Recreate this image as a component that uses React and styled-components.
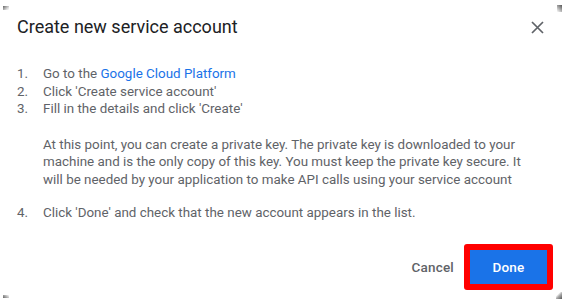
import * as React from "react";
import styled, { createGlobalStyle } from "styled-components";

const Global = createGlobalStyle`
  html, body {
    margin: 0;
    padding: 0;
    background: #fff;
  }
  body {
    font-family: Roboto, "Liberation Sans", Arial, sans-serif;
    -webkit-font-smoothing: antialiased;
  }
`;

const Dialog = styled.div`
  position: relative;
  width: 578px;
  height: 306px;
  box-sizing: border-box;
  padding: 15px 0 0 17px;

  display: flex;
  flex-direction: column;
  background: #fff;
`;

const Header = styled.div`
  display: flex;
  justify-content: space-between;
  align-items: center;
  padding-right: 34px;
`;

const Title = styled.h2`
  margin: 0;
  font-size: 18px;
  font-weight: 400;
  line-height: 24px;
  color: #202124;
`;

const Close = styled.button`
  display: flex;
  align-items: center;
  justify-content: center;
  width: 14px;
  height: 14px;
  padding: 0;
  border: 0;
  background: none;
  cursor: pointer;
`;

const Steps = styled.ol`
  margin: 26px 0 0;
  padding: 0;
  list-style: none;

  font-size: 13.4px;
  line-height: 17.5px;
  color: #5f6368;
`;

const Step = styled.li`
  display: flex;
  margin-top: ${(p) => (p.$spaced ? "16px" : "0")};
`;

const Num = styled.span`
  flex: 0 0 26px;
`;

const StepBody = styled.div`
  flex: 1;
  padding-right: 40px;
`;

const Note = styled.p`
  margin: 18px 0 0;
`;

const Link = styled.a`
  color: #1a73e8;
  text-decoration: none;
`;

const Footer = styled.div`
  margin-top: auto;
  display: flex;
  justify-content: flex-end;
  align-items: center;
  gap: 2px;
  padding: 0 25px 16px 0;
`;

const TextButton = styled.button`
  padding: 0 8px;
  height: 36px;
  border: 0;
  background: none;
  font-family: inherit;
  font-size: 13.5px;
  font-weight: 500;
  letter-spacing: 0.2px;
  color: #5f6368;
`;

const Highlight = styled.span`
  display: inline-flex;
  border: 6px solid #ff0000;
  border-radius: 3px;
`;

const PrimaryButton = styled.button`
  width: 77px;
  height: 34px;
  border: 0;
  background: #1a73e8;
  font-family: inherit;
  font-size: 13.5px;
  font-weight: 500;
  letter-spacing: 0.2px;
  color: #fff;
`;

const Corner = styled.span`
  position: absolute;
  width: 6px;
  height: 4px;
  ${(p) => p.$pos};
  background: ${(p) => p.$bg};
`;

const CloseIcon = () => (
  <svg width="13" height="13" viewBox="0 0 13 13">
    <path d="M1 1 L12 12 M12 1 L1 12" stroke="#5f6368" strokeWidth="1.7" />
  </svg>
);

const App = () => (
  <>
    <Global />
    <Dialog>
      <Corner $pos="left: 3px; top: 6px;" $bg="linear-gradient(135deg, #666 0%, #ddd 70%, transparent 100%)" />
      <Corner $pos="right: 16px; top: 5px; height: 7px; width: 5px;" $bg="linear-gradient(225deg, #555 0%, #bbb 60%, transparent 100%)" />
      <Corner $pos="left: 3px; top: 295px; height: 3px;" $bg="linear-gradient(45deg, #666 0%, #ccc 70%, transparent 100%)" />
      <Corner $pos="right: 16px; top: 292px; height: 7px; width: 6px;" $bg="linear-gradient(315deg, #555 0%, #aaa 45%, transparent 70%)" />
      <Header>
        <Title>Create new service account</Title>
        <Close aria-label="Close">
          <CloseIcon />
        </Close>
      </Header>
      <Steps>
        <Step>
          <Num>1.</Num>
          <StepBody>
            Go to the <Link href="#">Google Cloud Platform</Link>
          </StepBody>
        </Step>
        <Step>
          <Num>2.</Num>
          <StepBody>Click 'Create service account'</StepBody>
        </Step>
        <Step>
          <Num>3.</Num>
          <StepBody>
            Fill in the details and click 'Create'
            <Note>
              At this point, you can create a private key. The private key is
              downloaded to your machine and is the only copy of this key. You
              must keep the private key secure. It will be needed by your
              application to make API calls using your service account
            </Note>
          </StepBody>
        </Step>
        <Step $spaced>
          <Num>4.</Num>
          <StepBody>
            Click 'Done' and check that the new account appears in the list.
          </StepBody>
        </Step>
      </Steps>
      <Footer>
        <TextButton>Cancel</TextButton>
        <Highlight>
          <PrimaryButton>Done</PrimaryButton>
        </Highlight>
      </Footer>
    </Dialog>
  </>
);

export default App;
